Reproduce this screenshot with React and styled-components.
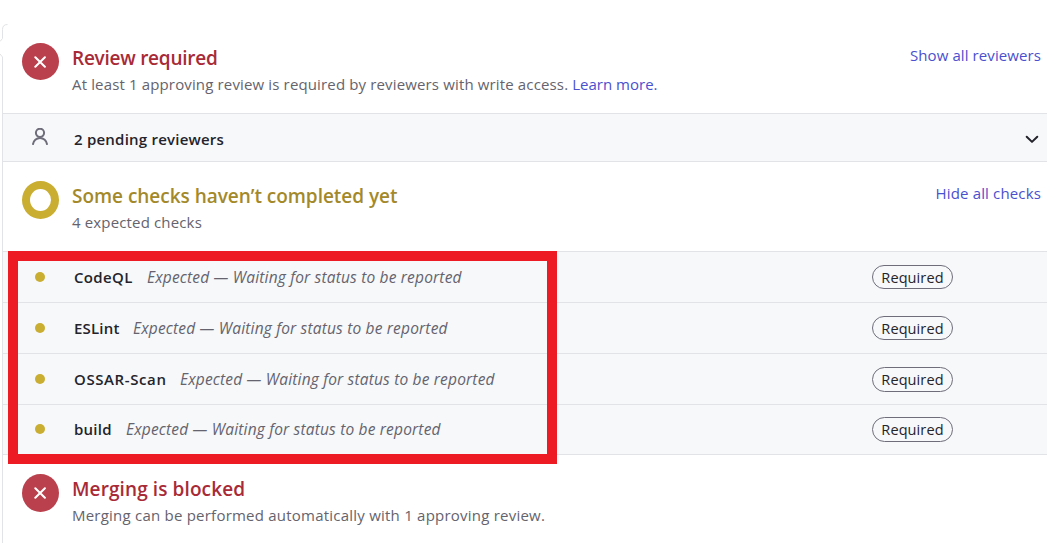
import React from "react";
import styled, { createGlobalStyle } from "styled-components";

const line = "#e1e3e6";

const Global = createGlobalStyle`
  * { box-sizing: border-box; }
  body {
    margin: 0;
    background: #fff;
    overflow: hidden;
    font-family: "Open Sans", "Noto Sans", sans-serif;
    font-size: 15px;
    color: #24232b;
  }
`;

const Page = styled.main`
  position: relative;
  height: 543px;
  padding: 24px 0 0 2px;
  overflow: hidden;
`;

const Panel = styled.div`
  border-left: 1px solid ${line};
  height: 519px;
`;

const CaretEdge = styled.svg`
  position: absolute;
  left: 0;
  top: 23px;
  background: #fff;
`;

const Section = styled.section`
  display: flex;
  align-items: flex-start;
  height: ${(p) => p.$height}px;
  padding: 19px 6px 0 19px;
`;

const StatusDisc = styled.div`
  flex: none;
  display: grid;
  place-items: center;
  width: 37px;
  height: ${(p) => p.$height || 37}px;
  margin-right: 13px;
  border-radius: 50%;
  background: ${(p) => (p.$pending ? "transparent" : "#b9404c")};
  border: ${(p) => (p.$pending ? "8px solid #c9ae31" : "none")};
`;

const SectionText = styled.div`
  flex: 1;
  white-space: nowrap;
`;

const Heading = styled.h3`
  margin: 0;
  font-size: 19px;
  line-height: 30px;
  font-weight: 580;
  letter-spacing: ${(p) => p.$track || 0}px;
  color: ${(p) => (p.$tone === "pending" ? "#a38929" : "#a92a37")};
`;

const Detail = styled.p`
  margin: 0;
  line-height: 22px;
  letter-spacing: ${(p) => p.$track || 0}px;
  color: #65636d;
`;

const TextLink = styled.a`
  color: #4a50cf;
  line-height: 22px;
  letter-spacing: ${(p) => p.$track || 0}px;
  white-space: nowrap;
  margin-top: ${(p) => p.$top || 0}px;
`;

const Divider = styled.div`
  height: 1px;
  background: ${line};
`;

const Row = styled.div`
  display: flex;
  align-items: center;
  height: ${(p) => p.$height}px;
  padding: 0 6px ${(p) => p.$bottom || 0}px 19px;
  border-top: 1px solid ${line};
  background: #f6f8fa;
  white-space: nowrap;
`;

const RowIcon = styled.div`
  flex: none;
  display: grid;
  place-items: center;
  width: 36px;
  margin-right: 16px;
`;

const RowName = styled.strong`
  font-weight: 580;
  line-height: 22px;
  padding-top: ${(p) => p.$top || 0}px;
  letter-spacing: ${(p) => p.$track || 0}px;
  width: ${(p) => (p.$width ? p.$width + "px" : "auto")};
`;

const RowStatus = styled.em`
  flex: 1;
  font-size: 15.5px;
  line-height: 22px;
  color: #65636d;
  letter-spacing: 0.18px;
`;

const Dot = styled.span`
  width: 10px;
  height: 10px;
  border-radius: 50%;
  background: #c9ae31;
`;

const Badge = styled.span`
  display: grid;
  place-items: center;
  width: 81px;
  height: ${(p) => p.$height}px;
  margin-right: 88px;
  padding-top: 1px;
  border: 1px solid #6f6d7a;
  border-radius: 13px;
  line-height: 21px;
  font-weight: 500;
  font-size: 14.5px;
  letter-spacing: 0.1px;
`;

const Chevron = styled.svg`
  margin: 2px 1px 0 auto;
`;

const Highlight = styled.div`
  position: absolute;
  left: 8px;
  top: 251px;
  width: 549px;
  height: 213px;
  border: 10px solid #ed1c24;
`;

const checks = [
  { name: "CodeQL", width: 73, height: 51, track: 0.35, badge: 24 },
  { name: "ESLint", width: 59, height: 51, track: 0.2, badge: 24 },
  { name: "OSSAR-Scan", width: 106, height: 51, track: 0.6, badge: 25 },
  { name: "build", width: 52, height: 50, track: 0.25, badge: 25, bottom: 1 },
];

function Cross() {
  return (
    <svg width="14" height="14" viewBox="0.3 0 14 14" fill="none" stroke="#fff" strokeWidth="2" strokeLinecap="round">
      <path d="M1.6 2.2 11.2 11.8M11.2 2.2 1.6 11.8" />
    </svg>
  );
}

function Person() {
  return (
    <svg width="18" height="20" viewBox="0 1 18 20" fill="none" stroke="#6f6d7a" strokeWidth="2" strokeLinecap="round">
      <circle cx="9" cy="5.8" r="4.1" />
      <path d="M2 17.1a7.05 7.05 0 0 1 14 0" />
    </svg>
  );
}

export default function App() {
  return (
    <>
      <Global />
      <Page>
        <Panel>
          <Section $height={89}>
            <StatusDisc><Cross /></StatusDisc>
            <SectionText>
              <Heading $track={-0.25}>Review required</Heading>
              <Detail $track={0.145}>
                At least 1 approving review is required by reviewers with write access.{" "}
                <TextLink>Learn more.</TextLink>
              </Detail>
            </SectionText>
            <TextLink $top={1} $track={0.09}>Show all reviewers</TextLink>
          </Section>
          <Row $height={48}>
            <RowIcon><Person /></RowIcon>
            <RowName $track={0.22} $top={2}>2 pending reviewers</RowName>
            <Chevron width="16" height="16" viewBox="0 0 16 16" fill="none" stroke="#24232b" strokeWidth="2" strokeLinecap="round" strokeLinejoin="round">
              <path d="M2.7 5.7 8 10.9 13.3 5.7" />
            </Chevron>
          </Row>
          <Divider />
          <Section $height={89}>
            <StatusDisc $pending $height={38} />
            <SectionText>
              <Heading $tone="pending" $track={-0.03}>Some checks haven’t completed yet</Heading>
              <Detail $track={0.15}>4 expected checks</Detail>
            </SectionText>
            <TextLink $top={1} $track={0.15}>Hide all checks</TextLink>
          </Section>
          {checks.map((c) => (
            <Row key={c.name} $height={c.height} $bottom={c.bottom}>
              <RowIcon><Dot /></RowIcon>
              <RowName $width={c.width} $track={c.track}>{c.name}</RowName>
              <RowStatus>Expected — Waiting for status to be reported</RowStatus>
              <Badge $height={c.badge}>Required</Badge>
            </Row>
          ))}
          <Divider />
          <Section $height={88}>
            <StatusDisc $height={38}><Cross /></StatusDisc>
            <SectionText>
              <Heading $track={0.1}>Merging is blocked</Heading>
              <Detail $track={0.225}>Merging can be performed automatically with 1 approving review.</Detail>
            </SectionText>
          </Section>
        </Panel>
        <CaretEdge width="8" height="34" viewBox="0 0 8 34" fill="none" stroke={line}>
          <path d="M7.5 1.5Q2.5 1.5 2.5 6.5V15.5L0 18.5M0 31 2.5 34" />
        </CaretEdge>
        <Highlight />
      </Page>
    </>
  );
}
